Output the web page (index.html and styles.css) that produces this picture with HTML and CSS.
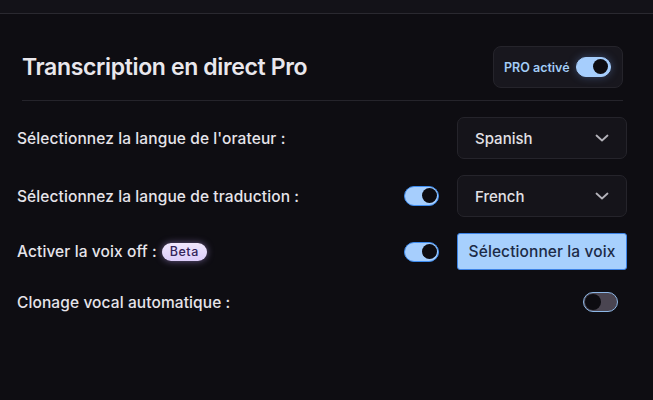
FILE: index.html
```html
<!DOCTYPE html>
<html lang="fr">
<head>
<meta charset="utf-8">
<link rel="stylesheet" href="styles.css">
</head>
<body>
<div class="topbar"></div>
<main class="panel">
  <div class="title-row">
    <h1 class="title">Transcription en direct Pro</h1>
    <div class="pro-box">
      <span class="pro-label">PRO activé</span>
      <span class="toggle toggle-on toggle-glow"><span class="knob"></span></span>
    </div>
  </div>
  <div class="divider"></div>
  <div class="rows">
    <div class="row row-select">
      <span class="label">Sélectionnez la langue de l'orateur :</span>
      <span class="slot"></span>
      <div class="select"><span>Spanish</span>
        <svg class="chev" width="14" height="8" viewBox="0 0 14 8"><path d="M1.5 1.5 L7 6.5 L12.5 1.5" fill="none" stroke="#b4b3ba" stroke-width="1.8" stroke-linecap="round" stroke-linejoin="round"/></svg>
      </div>
    </div>
    <div class="row row-select">
      <span class="label">Sélectionnez la langue de traduction :</span>
      <span class="slot"><span class="toggle toggle-on"><span class="knob"></span></span></span>
      <div class="select"><span>French</span>
        <svg class="chev" width="14" height="8" viewBox="0 0 14 8"><path d="M1.5 1.5 L7 6.5 L12.5 1.5" fill="none" stroke="#b4b3ba" stroke-width="1.8" stroke-linecap="round" stroke-linejoin="round"/></svg>
      </div>
    </div>
    <div class="row row-button">
      <span class="label">Activer la voix off : <span class="beta">Beta</span></span>
      <span class="slot"><span class="toggle toggle-on"><span class="knob"></span></span></span>
      <button class="voice-btn">Sélectionner la voix</button>
    </div>
    <div class="row row-last">
      <span class="label">Clonage vocal automatique :</span>
      <span class="slot"></span>
      <div class="end"><span class="toggle toggle-off"><span class="knob"></span></span></div>
    </div>
  </div>
</main>
</body>
</html>
```

FILE: styles.css
```css
* { box-sizing: border-box; }
html, body { margin: 0; padding: 0; }
body {
  width: 653px;
  height: 400px;
  background: #0e0d12;
  font-family: "Inter", "Noto Sans", sans-serif;
  color: #e6e4ea;
  overflow: hidden;
}
.topbar {
  height: 14px;
  background: #131218;
  border-bottom: 1px solid #2a2930;
}
.panel {
  padding: 32px 0 0 0;
}
.title-row {
  display: flex;
  align-items: center;
  justify-content: space-between;
  padding: 0 30px 0 22px;
  height: 42px;
}
.title {
  margin: 0;
  font-size: 23px;
  font-weight: 600;
  letter-spacing: -0.35px;
  color: #e9e7ec;
}
.pro-box {
  width: 130px;
  height: 42px;
  display: flex;
  align-items: center;
  gap: 6px;
  padding-left: 10px;
  background: #18171e;
  border: 1px solid #25242b;
  border-radius: 8px;
}
.pro-label {
  font-size: 12.5px;
  font-weight: 600;
  letter-spacing: 0;
  color: #a3ccf6;
}
.divider {
  margin: 12px 30px 0 22px;
  height: 1px;
  background: #25242b;
}
.rows {
  padding: 16px 26px 0 17px;
  display: flex;
  flex-direction: column;
}
.row {
  display: grid;
  grid-template-columns: 1fr 35px 170px;
  column-gap: 18px;
  align-items: center;
}
.row-select { height: 42px; margin-bottom: 16px; }
.row-button { height: 37px; margin-bottom: 22px; }
.row-last { height: 20px; }
.label {
  font-size: 15.5px;
  font-weight: 500;
  letter-spacing: 0.1px;
  color: #e6e4ea;
  display: flex;
  align-items: center;
  gap: 5px;
  white-space: nowrap;
}
.slot { display: flex; align-items: center; justify-content: center; }
.select {
  height: 42px;
  display: flex;
  align-items: center;
  justify-content: space-between;
  padding: 0 17px 0 17px;
  background: #15141a;
  border: 1px solid #25242b;
  border-radius: 7px;
  font-size: 15px;
  font-weight: 500;
  letter-spacing: 0;
  color: #e2e1e6;
}
.voice-btn {
  height: 37px;
  width: 170px;
  margin: 0;
  padding: 0;
  background: #a7d0fd;
  border: 1px solid #3c83e6;
  border-radius: 3px;
  font-family: inherit;
  font-size: 15.5px;
  font-weight: 500;
  letter-spacing: 0.1px;
  color: #1c2b47;
}
.end { display: flex; justify-content: flex-end; padding-right: 9px; }
.beta {
  display: inline-flex;
  align-items: center;
  justify-content: center;
  width: 45px;
  height: 18px;
  border-radius: 9px;
  background: linear-gradient(180deg, #efe6fc, #dccdfa);
  color: #33245a;
  font-size: 12.5px;
  font-weight: 500;
  letter-spacing: 0.5px;
  box-shadow: 0 0 7px rgba(195, 165, 255, 0.5);
}
.toggle {
  position: relative;
  display: inline-block;
  width: 35px;
  height: 20px;
  border-radius: 10px;
}
.toggle .knob {
  position: absolute;
  top: 2px;
  width: 15px;
  height: 15px;
  border-radius: 50%;
  background: #0d0c11;
}
.toggle-on {
  background: #a6cefd;
  border: 1.5px solid #3d8cf0;
}
.toggle-on .knob { right: 1.5px; top: 1px; }
.toggle-glow {
  border-color: #a6cefd;
  box-shadow: 0 0 8px rgba(120, 170, 255, 0.35);
}
.toggle-off {
  background: #4a4551;
  border: 1.5px solid #8db7e6;
}
.toggle-off .knob { left: 1px; top: 0.5px; width: 16px; height: 16px; }
```
